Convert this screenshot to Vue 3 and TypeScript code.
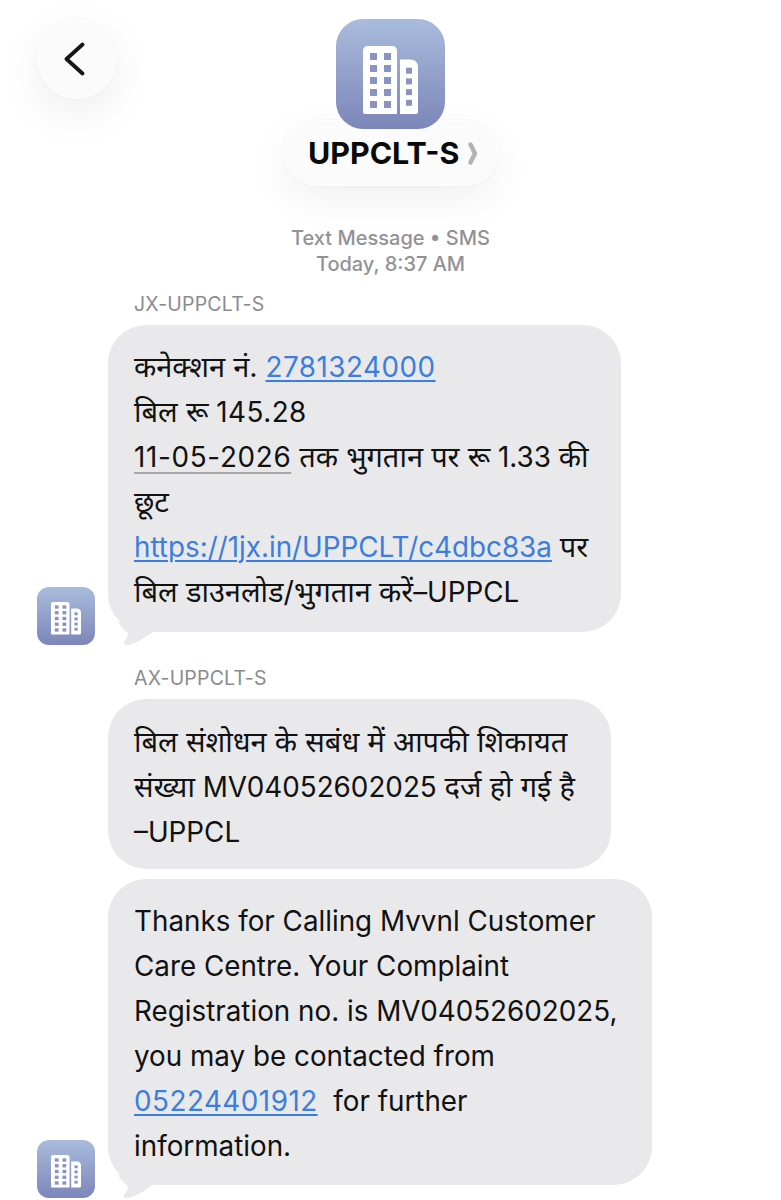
<template>
  <div class="screen">
    <button class="back" aria-label="Back">
      <svg width="26" height="36" viewBox="0 0 26 36">
        <path d="M18.5 3.5 L2.5 18 L18.5 32.5" fill="none" stroke="#161616" stroke-width="3.8" stroke-linecap="round" stroke-linejoin="round" />
      </svg>
    </button>

    <header class="head">
      <div class="app-icon">
        <svg width="55" height="69" viewBox="0 0 55 69">
          <path :d="TOWER_PATH" fill="#fff" />
          <rect v-for="w in windows" :key="w.x + '-' + w.y" :x="w.x" :y="w.y" :width="w.s" :height="w.s" fill="#8a94c4" />
        </svg>
      </div>
      <div class="name-pill">
        <span class="name">UPPCLT-S</span>
        <svg class="chev" width="11" height="23" viewBox="0 0 11 23">
          <path d="M2.5 2.5 L7 11.5 L2.5 20.5" fill="none" stroke="#b2b2b4" stroke-width="4.4" stroke-linecap="round" stroke-linejoin="round" />
        </svg>
      </div>
    </header>

    <div class="stamp">
      <div>Text Message • SMS</div>
      <div>Today, 8:37 AM</div>
    </div>

    <div class="sender first">JX-UPPCLT-S</div>
    <div class="row row-one">
      <div class="avatar">
        <svg width="30" height="33" viewBox="0 0 55 69" preserveAspectRatio="none">
          <path :d="TOWER_PATH" fill="#fff" />
          <rect v-for="w in windows" :key="w.x + '-' + w.y" :x="w.x" :y="w.y" :width="w.s" :height="w.s" fill="#8a94c4" />
        </svg>
      </div>
      <div class="bubble b1">
        <div><span class="hi">कनेक्शन नं.</span> <a class="link num">2781324000</a></div>
        <div><span class="hi">बिल रू</span> <span class="num">145.28</span></div>
        <div><span class="date">11-05-2026</span> <span class="hi">तक भुगतान पर रू</span> 1.33 <span class="hi">की</span></div>
        <div><span class="hi">छूट</span></div>
        <div><a class="link">https://1jx.in/UPPCLT/c4dbc83a</a> <span class="hi">पर</span></div>
        <div><span class="hi">बिल डाउनलोड/भुगतान करें</span>–UPPCL</div>
        <svg class="tail" width="46" height="24" viewBox="0 0 46 24">
          <path d="M10 0 C13 5 17 9 20 11 C20 15 18 18 16 20 C15 22 17 23 19 23 C27 22 36 16 45 10 L45 0 Z" fill="#e9e9eb" />
        </svg>
      </div>
    </div>

    <div class="sender second">AX-UPPCLT-S</div>
    <div class="row">
      <div class="avatar-gap"></div>
      <div class="bubble b2">
        <div><span class="hi">बिल संशोधन के सबंध में आपकी शिकायत</span></div>
        <div><span class="hi">संख्या</span> MV04052602025 <span class="hi">दर्ज हो गई है</span></div>
        <div>–UPPCL</div>
      </div>
    </div>

    <div class="row third">
      <div class="avatar">
        <svg width="30" height="33" viewBox="0 0 55 69" preserveAspectRatio="none">
          <path :d="TOWER_PATH" fill="#fff" />
          <rect v-for="w in windows" :key="w.x + '-' + w.y" :x="w.x" :y="w.y" :width="w.s" :height="w.s" fill="#8a94c4" />
        </svg>
      </div>
      <div class="bubble b3">
        <div>Thanks for Calling Mvvnl Customer</div>
        <div>Care Centre. Your Complaint</div>
        <div>Registration no. is MV04052602025,</div>
        <div>you may be contacted from</div>
        <div><a class="link num">05224401912</a>&nbsp; for further</div>
        <div>information.</div>
        <svg class="tail" width="46" height="24" viewBox="0 0 46 24">
          <path d="M10 0 C13 5 17 9 20 11 C20 15 18 18 16 20 C15 22 17 23 19 23 C27 22 36 16 45 10 L45 0 Z" fill="#e9e9eb" />
        </svg>
      </div>
    </div>
  </div>
</template>

<script setup lang="ts">
interface Win {
  x: number;
  y: number;
  s: number;
}

const TOWER_PATH =
  "M0 5 Q0 0 5 0 L29 0 Q34 0 34 5 L34 68 L2 68 Q0 68 0 66 Z M37 13.5 L47 13.5 Q55 13.5 55 21.5 L55 66 Q55 68 53 68 L37 68 Z";

const windows: Win[] = [];
for (let r = 0; r < 5; r++) {
  windows.push({ x: 7, y: 7 + r * 12, s: 7 });
  windows.push({ x: 21, y: 7 + r * 12, s: 7 });
}
for (let r = 0; r < 4; r++) {
  windows.push({ x: 43, y: 21.7 + r * 10.7, s: 6 });
}
</script>

<style scoped>
.screen {
  position: relative;
  width: 781px;
  height: 1200px;
  overflow: hidden;
  background: #fff;
  font-family: Inter, "Noto Sans", "DejaVu Sans", sans-serif;
  color: #111;
}

.back {
  position: absolute;
  left: 37px;
  top: 19px;
  width: 80px;
  height: 80px;
  padding: 0;
  border: 1.5px solid #fff;
  border-radius: 50%;
  background: #fbfbfb;
  box-shadow: 0 0 0 1px rgba(0, 0, 0, 0.02), 0 14px 44px rgba(0, 0, 0, 0.07);
  display: flex;
  align-items: center;
  justify-content: center;
}

.head {
  display: flex;
  flex-direction: column;
  align-items: center;
  padding-top: 19px;
}

.app-icon {
  position: relative;
  z-index: 1;
  width: 109px;
  height: 110px;
  border-radius: 27px;
  background: linear-gradient(#a9bcdc, #7c86ba);
  display: flex;
  justify-content: center;
  padding-top: 27px;
  box-sizing: border-box;
}

.name-pill {
  position: relative;
  margin-top: -9px;
  width: 215px;
  height: 66px;
  box-sizing: border-box;
  padding-left: 24px;
  border: 1.5px solid #fff;
  border-radius: 33px;
  background: #fbfbfb;
  box-shadow: 0 0 0 1px rgba(0, 0, 0, 0.02), 0 14px 40px rgba(0, 0, 0, 0.06);
  display: flex;
  align-items: center;
  gap: 9px;
}

.name {
  font-size: 30.4px;
  font-weight: 700;
  color: #0a0a0a;
}

.stamp {
  margin-top: 39px;
  text-align: center;
  font-size: 20px;
  font-weight: 500;
  line-height: 26px;
  color: #929296;
}

.sender {
  margin-left: 134px;
  font-size: 19.5px;
  line-height: 24px;
  letter-spacing: 0.2px;
  color: #8b8b8f;
}

.first {
  margin-top: 15px;
}

.second {
  margin-top: 34px;
}

.row {
  display: flex;
  align-items: flex-end;
  margin-top: 9px;
  padding-left: 37px;
  gap: 13px;
}

.row-one {
  margin-top: 9px;
}

.third {
  margin-top: 10px;
}

.avatar,
.avatar-gap {
  flex: none;
  width: 58px;
}

.avatar {
  height: 58px;
  margin-bottom: -13px;
  border-radius: 12px;
  background: linear-gradient(#a9bcdc, #7c86ba);
  display: flex;
  justify-content: center;
  padding-top: 15px;
  box-sizing: border-box;
}

.bubble {
  position: relative;
  box-sizing: border-box;
  padding: 20px 26px 16px;
  border-radius: 38px;
  background: #e9e9eb;
  font-size: 27.8px;
  line-height: 45px;
  white-space: nowrap;
  color: #111;
}

.hi {
  font-size: 29px;
  line-height: 1;
}

.num {
  letter-spacing: 0.5px;
}

.b1 {
  width: 513px;
  padding-bottom: 17px;
}

.b2 {
  width: 503px;
  padding-top: 21px;
  padding-bottom: 14px;
}

.b3 {
  width: 544px;
}

.link {
  color: #3b7de0;
  text-decoration: underline;
  text-decoration-thickness: 1.5px;
  text-underline-offset: 3px;
}

.date {
  letter-spacing: 0.7px;
  text-decoration: underline;
  text-decoration-color: #a8a8aa;
  text-decoration-thickness: 1.5px;
  text-underline-offset: 5px;
}

.tail {
  position: absolute;
  left: 0;
  bottom: -14px;
}

.chev {
  flex: none;
}
</style>

<style>
html,
body {
  margin: 0;
  background: #fff;
}
</style>
